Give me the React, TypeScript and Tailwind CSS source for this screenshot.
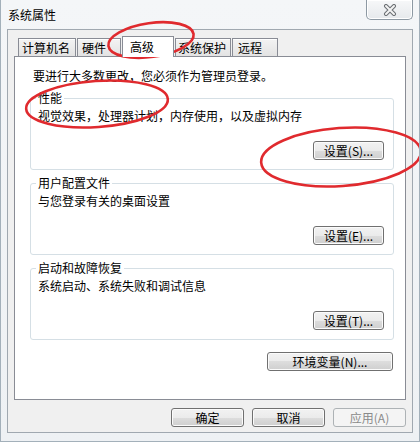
const font = "font-['Noto_Sans_CJK_SC','Noto_Sans',sans-serif]"

const btn =
  'flex h-[19px] items-center justify-center rounded-[3px] border border-[#707070] bg-[linear-gradient(to_bottom,#f2f2f2_0%,#ebebeb_50%,#dddddd_50%,#cfcfcf_100%)] text-[12px] leading-none text-black shadow-[inset_0_0_0_1px_#fbfbfb]'

const tabs = [
  { label: '计算机名', cls: 'w-[58px] pl-[3px]' },
  { label: '硬件', cls: 'w-[44px] pl-[4px]' },
  { label: '高级', cls: 'w-[52px] pl-[7px]', active: true },
  { label: '系统保护', cls: 'w-[56px] pl-[2px]' },
  { label: '远程', cls: 'w-[46px] pl-[5px]' },
]

const groups = [
  { title: '性能', desc: '视觉效果，处理器计划，内存使用，以及虚拟内存', btn: '设置(S)...' },
  { title: '用户配置文件', desc: '与您登录有关的桌面设置', btn: '设置(E)...' },
  { title: '启动和故障恢复', desc: '系统启动、系统失败和调试信息', btn: '设置(T)...' },
]

function GroupBox({ title, desc, label }: { title: string; desc: string; label: string }) {
  return (
    <fieldset className="mt-[5px] ml-[15px] mr-[11px] rounded-[3px] border border-[#d5dfe5] first:mt-0">
      <legend className="ml-[5px] px-[2px] text-[12px] leading-[16px] text-black">{title}</legend>
      <div className="flex flex-col pl-[7px] pr-[9px] pb-[9px]">
        <p className="mt-[2px] text-[12px] leading-[16px] text-black">{desc}</p>
        <div className="mt-[17px] flex justify-end">
          <button className={`${btn} w-[71px]`}>{label}</button>
        </div>
      </div>
    </fieldset>
  )
}

export default function App() {
  return (
    <div className={`relative flex h-[442px] w-[420px] flex-col overflow-hidden border-x border-b border-[#a3b0ba] bg-[linear-gradient(to_bottom,#f4f6f8,#eef1f4)] ${font}`}>
      {/* Title bar */}
      <div className="flex h-[29px] shrink-0 items-center px-[7px] text-[12px] text-black">系统属性</div>
      <button className="absolute top-0 right-[6px] flex h-[20px] w-[47px] items-center justify-center rounded-b-[5px] border border-t-0 border-[#8d99a3] bg-[linear-gradient(to_bottom,#f7f8f9,#e6e9ec)] shadow-[inset_0_0_0_1px_#ffffff]">
        <svg width="14" height="12" viewBox="0 0 14 12">
          <path d="M3 2 L11 10 M11 2 L3 10" stroke="#6b6f73" strokeWidth="4" strokeLinecap="round" />
          <path d="M3 2 L11 10 M11 2 L3 10" stroke="#f4f4f4" strokeWidth="2" strokeLinecap="round" />
        </svg>
      </button>

      {/* Client area */}
      <div className="mx-[6px] flex h-[404px] shrink-0 flex-col border border-[#a0a8b0] bg-[#f0f0f0] pt-[6px] pb-[5px]">
        {/* Tabs */}
        <div className="ml-[10px] flex h-[20px] items-end gap-px">
          {tabs.map((t) =>
            t.active ? (
              <div
                key={t.label}
                className={`relative z-10 mb-[-1px] flex h-[21px] items-center border border-b-0 border-[#898c95] bg-white text-[12px] text-black ${t.cls}`}
              >
                {t.label}
              </div>
            ) : (
              <div
                key={t.label}
                className={`flex h-[18px] items-center border border-b-0 border-[#898c95] bg-[linear-gradient(to_bottom,#f3f3f3,#e3e3e3)] text-[12px] text-black shadow-[inset_0_1px_0_#ffffff] ${t.cls}`}
              >
                {t.label}
              </div>
            ),
          )}
        </div>

        {/* Tab panel */}
        <div className="ml-[6px] mr-[6px] flex h-[344px] flex-col border border-[#898c95] bg-white pt-[11px]">
          <p className="pl-[18px] text-[12px] leading-[16px] text-black">要进行大多数更改，您必须作为管理员登录。</p>
          <div className="mt-[6px] flex flex-col">
            {groups.map((g) => (
              <GroupBox key={g.title} title={g.title} desc={g.desc} label={g.btn} />
            ))}
          </div>
          <div className="mt-[12px] mr-[12px] flex justify-end">
            <button className={`${btn} w-[126px]`}>环境变量(N)...</button>
          </div>
        </div>

        {/* Dialog buttons */}
        <div className="mt-[8px] flex justify-end gap-[8px] pr-[6px]">
          <button className={`${btn} w-[73px]`}>确定</button>
          <button className={`${btn} w-[73px]`}>取消</button>
          <button className="flex h-[19px] w-[73px] items-center justify-center rounded-[3px] border border-[#adb2b5] bg-[#f4f4f4] text-[12px] leading-none text-[#8a8a8a]">
            应用(A)
          </button>
        </div>
      </div>

      {/* Red annotation marks */}
      <svg className="pointer-events-none absolute inset-0" width="420" height="442" viewBox="0 0 420 442">
        <g fill="none" stroke="#e02a2e" strokeWidth="2.6">
          <ellipse cx="150" cy="40" rx="43" ry="17" transform="rotate(-8 150 40)" />
          <ellipse cx="96" cy="104" rx="71" ry="23" transform="rotate(-4 96 104)" />
          <ellipse cx="340" cy="157" rx="80" ry="29" transform="rotate(-4 340 157)" />
        </g>
      </svg>
    </div>
  )
}
